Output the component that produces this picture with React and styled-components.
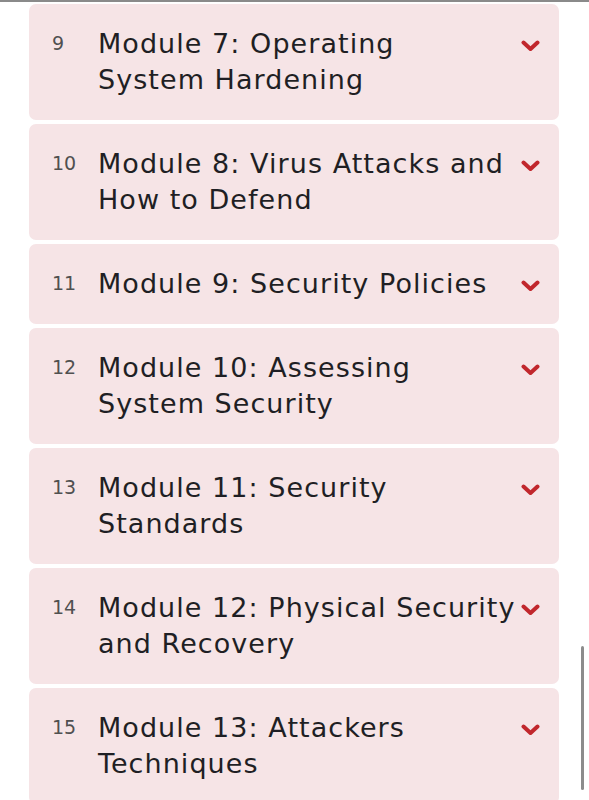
import React from "react";
import styled, { createGlobalStyle } from "styled-components";

const modules = [
  { n: 9, lines: ["Module 7: Operating", "System Hardening"] },
  { n: 10, lines: ["Module 8: Virus Attacks and", "How to Defend"] },
  { n: 11, lines: ["Module 9: Security Policies"] },
  { n: 12, lines: ["Module 10: Assessing", "System Security"] },
  { n: 13, lines: ["Module 11: Security", "Standards"] },
  { n: 14, lines: ["Module 12: Physical Security", "and Recovery"] },
  { n: 15, lines: ["Module 13: Attackers", "Techniques"] },
];

const Chevron = () => (
  <svg width="19" height="12" viewBox="0 0 19 12">
    <polyline
      points="2.5,2.5 9.5,9 16.5,2.5"
      fill="none"
      stroke="currentColor"
      strokeWidth="4"
      strokeLinecap="round"
      strokeLinejoin="round"
    />
  </svg>
);

export default function App() {
  return (
    <>
      <GlobalStyle />
      <StyledPage>
        <StyledTopRule />
        <StyledList>
          {modules.map((m) => (
            <StyledCard key={m.n}>
              <StyledNumber>{m.n}</StyledNumber>
              <StyledTitle>
                {m.lines.map((line) => (
                  <StyledLine key={line}>{line}</StyledLine>
                ))}
              </StyledTitle>
              <StyledChevron>
                <Chevron />
              </StyledChevron>
            </StyledCard>
          ))}
        </StyledList>
        <StyledScrollbar />
      </StyledPage>
    </>
  );
}

const GlobalStyle = createGlobalStyle`
  body {
    margin: 0;
    background: #ffffff;
    font-family: "DejaVu Sans", "Noto Sans", sans-serif;
  }
`;

const StyledPage = styled.div`
  position: relative;
  width: 589px;
  height: 800px;
  overflow: hidden;
  background: #ffffff;
`;

const StyledTopRule = styled.div`
  height: 2px;
  background: #8a8a8a;
`;

const StyledList = styled.div`
  display: flex;
  flex-direction: column;
  gap: 4px;
  padding: 2px 30px 0 29px;
`;

const StyledCard = styled.div`
  display: flex;
  align-items: flex-start;
  background: #f6e4e6;
  border-radius: 7px;
  padding: 22px 18px 22px 23px;
`;

const StyledNumber = styled.span`
  width: 46px;
  flex-shrink: 0;
  padding-top: 4px;
  font-size: 19px;
  line-height: 26px;
  color: #505050;
`;

const StyledTitle = styled.div`
  flex: 1;
  font-size: 27px;
  line-height: 36px;
  letter-spacing: 1.05px;
  color: #1f1f24;
`;

const StyledLine = styled.div`
  white-space: nowrap;
`;

const StyledChevron = styled.span`
  width: 22px;
  display: flex;
  justify-content: center;
  padding-top: 14px;
  color: #c1272d;
`;

const StyledScrollbar = styled.div`
  position: absolute;
  right: 5px;
  top: 646px;
  width: 3px;
  height: 144px;
  border-radius: 2px;
  background: #8c8c8c;
`;
